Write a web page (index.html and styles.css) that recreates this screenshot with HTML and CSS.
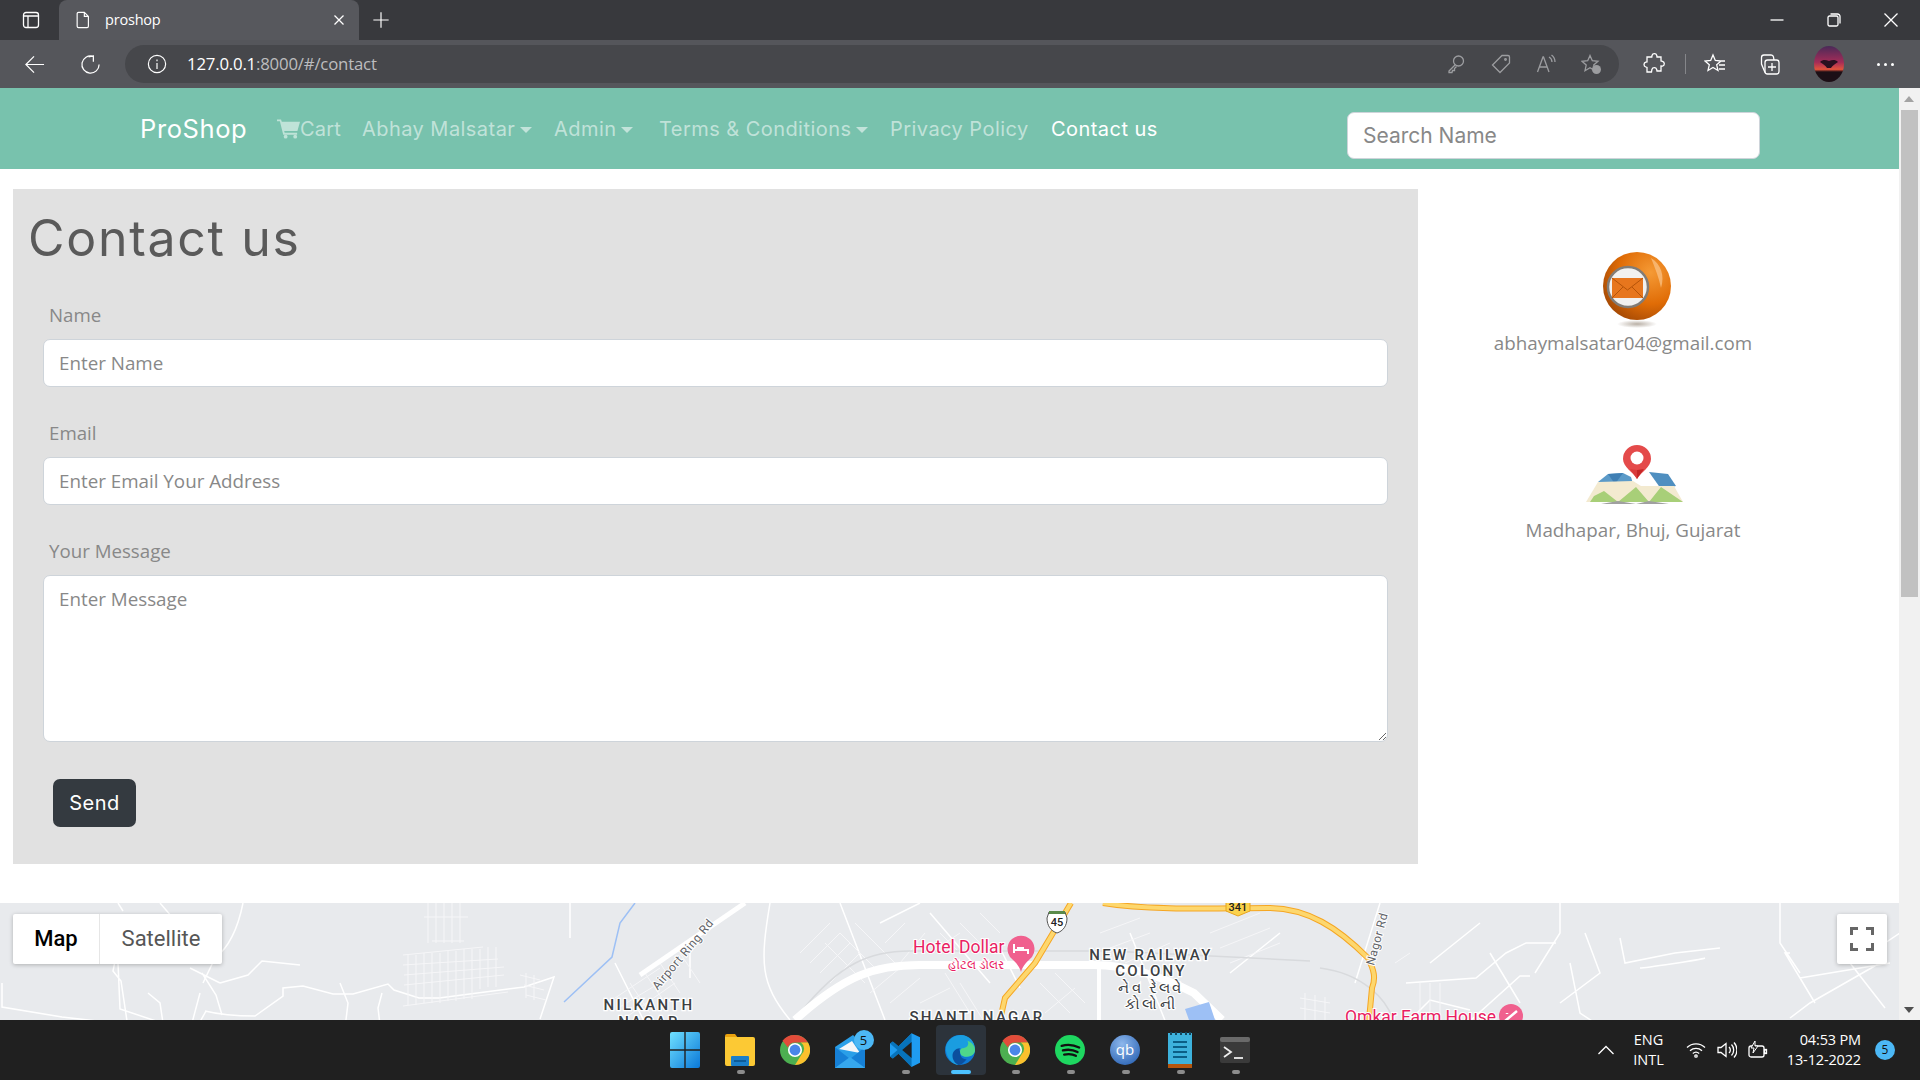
FILE: index.html
```html
<!DOCTYPE html>
<html lang="en">
<head>
<meta charset="utf-8">
<title>proshop</title>
<link rel="stylesheet" href="styles.css">
</head>
<body>
<header class="browser">
  <div class="tabstrip">
    <svg class="ico side-ico" viewBox="0 0 20 20"><rect x="2.5" y="2.5" width="15" height="15" rx="2.5"/><path d="M2.5 6h15M7 6v11.5"/></svg>
    <div class="tab">
      <svg class="ico doc-ico" viewBox="0 0 20 20"><path d="M5 1.5h6.5L16 6v11a1.5 1.5 0 0 1-1.500 1.500H5A1.500 1.500 0 0 1 3.500 17V3A1.500 1.500 0 0 1 5 1.500zM11.500 1.500V6H16"/></svg>
      <span class="tab-title">proshop</span>
      <svg class="ico close-ico" viewBox="0 0 12 12"><path d="M1.500 1.500l9 9M10.500 1.500l-9 9"/></svg>
    </div>
    <svg class="ico plus-ico" viewBox="0 0 20 20"><path d="M10 1.500v17M1.500 10h17"/></svg>
    <div class="winctl">
      <svg class="ico" viewBox="0 0 14 14"><path d="M.5 7h13"/></svg>
      <svg class="ico" viewBox="0 0 14 14"><rect x="1" y="3" width="10" height="10" rx="1.500"/><path d="M3.500 1h7A2.500 2.500 0 0 1 13 3.500v7"/></svg>
      <svg class="ico" viewBox="0 0 14 14"><path d="M.5.5l13 13M13.500.5l-13 13"/></svg>
    </div>
  </div>
  <div class="toolbar">
    <svg class="ico back-ico" viewBox="0 0 22 22"><path d="M21 11H2M10.500 2.500L2 11l8.500 8.500"/></svg>
    <svg class="ico reload-ico" viewBox="0 0 22 22"><path d="M13.500 2.400A9 9 0 1 0 20 11M14 8V2h-0.500M14 2l-5 1"/></svg>
    <div class="addressbar">
      <svg class="ico info-ico" viewBox="0 0 22 22"><circle cx="11" cy="11" r="9.500"/><path d="M11 10v6.500M11 6v2"/></svg>
      <span class="url"><b>127.0.0.1</b>:8000/#/contact</span>
      <span class="addr-icons">
        <svg class="ico dim" viewBox="0 0 20 20"><circle cx="12.500" cy="7" r="5"/><path d="M9 11l-6 6v1.500h3l.5-2h2v-2l2-2"/></svg>
        <svg class="ico dim" viewBox="0 0 20 20"><path d="M11 1.500h6a1.500 1.500 0 0 1 1.500 1.500v6L9 18.500 1.500 11z"/><circle cx="14.500" cy="5.500" r=".8"/></svg>
        <svg class="ico dim" viewBox="0 0 20 20"><path d="M1.500 18L7 3h.5l5.500 15M3.500 13h8M13 3a6 6 0 0 1 3 5M15.500 1a9 9 0 0 1 3.500 7"/></svg>
        <svg class="ico dim" viewBox="0 0 20 20"><path d="M9 1.500l2.300 5.200 5.700.6-4.300 3.800 1.200 5.600L9 13.800 4 16.700l1.200-5.600L1 7.300l5.700-.6z"/><circle class="fill-dim" cx="15.500" cy="15.500" r="4.500"/></svg>
      </span>
    </div>
    <svg class="ico puzzle" viewBox="0 0 22 22"><path d="M9 2.500a2.500 2.500 0 0 1 4.800 0l.2 1.500h4v4l1.500.3a2.500 2.500 0 0 1 0 4.800L18 13v5h-4l-.3-1.500a2.500 2.500 0 0 0-4.800 0L8.500 19H4v-4.500L2.800 14a2.500 2.500 0 0 1 0-4.800L4 9V4h4.800z"/></svg>
    <span class="tool-sep"></span>
    <svg class="ico favs" viewBox="0 0 22 22"><path d="M9 2l2.300 5.500 5.700.5-4.300 3.800 1.300 5.700L9 14.500 4 17.500l1.300-5.700L1 8l5.700-.5zM15 8h6M15 12h6M15 16h6"/></svg>
    <svg class="ico colls" viewBox="0 0 22 22"><rect x="7" y="7" width="14" height="14" rx="2.500"/><path d="M14 10v8M10 14h8M7 19.500L3.500 11V4.500a2.500 2.500 0 0 1 2.500-2.500h7a2.500 2.500 0 0 1 2.500 2l.5 3"/></svg>
    <svg class="avatar" viewBox="0 0 30 36"><defs><linearGradient id="av" x1="0" y1="0" x2="0" y2="1"><stop offset="0" stop-color="#4a2a58"/><stop offset=".45" stop-color="#a42c58"/><stop offset=".65" stop-color="#e2533c"/><stop offset=".72" stop-color="#1c0f16"/></linearGradient></defs><ellipse cx="15" cy="18" rx="15" ry="18" fill="url(#av)"/><path d="M6 16c3-3 6-2 9-1 3-1 6-2 9 1-3 2-6 4-7 6h-4c-1-2-4-4-7-6z" fill="#2a1020"/></svg>
    <span class="dots"><i></i><i></i><i></i></span>
  </div>
</header>

<div class="viewport">
  <div class="page">
    <nav class="navbar">
      <a class="brand">ProShop</a>
      <a class="navlink cart"><svg class="cart-ico" viewBox="0 0 24 20"><path d="M0 0h4.200l.8 2.500h19l-2.700 9.500H7.500l.5 2h13v2H6.500L3 2H0z"/><circle cx="9" cy="18" r="2"/><circle cx="19" cy="18" r="2"/></svg>Cart</a>
      <a class="navlink drop abhay">Abhay Malsatar</a>
      <a class="navlink drop admin">Admin</a>
      <a class="navlink drop terms">Terms &amp; Conditions</a>
      <a class="navlink privacy">Privacy Policy</a>
      <a class="navlink active">Contact us</a>
      <input class="search" type="text" placeholder="Search Name">
    </nav>

    <main class="content">
      <section class="card">
        <h1>Contact us</h1>
        <form class="form">
          <label class="label">Name</label>
          <input class="field" type="text" placeholder="Enter Name">
          <label class="label">Email</label>
          <input class="field" type="text" placeholder="Enter Email Your Address">
          <label class="label">Your Message</label>
          <textarea class="field area" placeholder="Enter Message"></textarea>
          <button class="send" type="button">Send</button>
        </form>
      </section>
      <aside class="side">
        <div class="contact first">
          <svg class="mail-ball" viewBox="0 0 72 78">
            <defs>
              <radialGradient id="ball" cx=".7" cy=".3" r=".85"><stop offset="0" stop-color="#f59a35"/><stop offset=".55" stop-color="#e06c06"/><stop offset="1" stop-color="#9a4304"/></radialGradient>
              <radialGradient id="shade" cx=".5" cy=".5" r=".5"><stop offset="0" stop-color="#b9b0a6"/><stop offset="1" stop-color="#fff"/></radialGradient>
            </defs>
            <ellipse cx="36" cy="72" rx="20" ry="4" fill="url(#shade)"/>
            <circle cx="36" cy="34" r="34" fill="url(#ball)"/>
            <path d="M50 6c10 6 14 18 10 30-2-10-6-20-10-30z" fill="#fbc48a" opacity=".7"/>
            <circle cx="27" cy="35" r="20" fill="#f2f1ef" stroke="#827c76" stroke-width="2.500"/>
            <rect x="11" y="26" width="31" height="20" fill="#e7761d"/>
            <path d="M11 26l15.500 12L42 26M11 46l11-11M42 46L31 35" fill="none" stroke="#b55308" stroke-width="1"/>
          </svg>
          <p>abhaymalsatar04@gmail.com</p>
        </div>
        <div class="contact second">
          <svg class="map-ico" viewBox="0 0 98 60">
            <path d="M12 37l10-8 15-1 8 4 3 10z" fill="#5b9ac8"/>
            <path d="M63 27l19 2 8 12-15 3z" fill="#4f8fc0"/>
            <path d="M22 29l15-1-8 11z" fill="#3f7fb4"/>
            <path d="M0 57l12-20 35-1 8 5 33 0 9 16z" fill="#f3ead0"/>
            <path d="M8 51l10-5 14 11 18-15 13 15 12-15 22 15H4z" fill="#a8cf78"/>
            <path d="M15 59l17-3 18 3 13-3 20 3z" fill="#a0a0a0"/>
            <path d="M51 34c-4-7-14-12-14-20a14 14 0 0 1 28 0c0 8-10 13-14 20z" fill="#e44a4a"/>
            <circle cx="51" cy="13" r="6.500" fill="#fff"/>
            <path d="M51 34c-3-5-5-7-7-10l7 1v9z" fill="#d93c3c"/>
            <path d="M51 34c3-5 5-7 7-10l-7 1z" fill="#c52727"/>
          </svg>
          <p>Madhapar, Bhuj, Gujarat</p>
        </div>
      </aside>
    </main>

    <section class="map">
      <svg class="map-svg" viewBox="0 0 1899 117">
        <g class="r-thin">
          <path d="M118 0l5 8M160 0l12 14-6 8h-18l-4 10M243 0c-5 25-15 45-28 55l-12 25"/>
          <path d="M2 80l0 24 60 10 35 4h30l-6-40-8-10 8-40M118 60l2 46 60 20M148 90l12 10 3 20M200 90l-8 30M206 108l-10 18M205 108c20 5 45 5 50 5l28-20 0-8 20-2 30 8h20l35-10 6 6 25 8 20 0 85-11 30-10-14 42M340 80l8 20-3 25M382 90l-4 15 3 25"/>
          <path d="M202 70l14 22 6 20M220 80l28-8 14-14 38 4M190 65l30 15M570 0v35M615 60l30 60M660 60l40-30"/>
          <path d="M770 0c-10 60-10 80 20 117M840 0l45 117M690 35v40M880 20l40-20M930 10l60 70M1020 85l-20-40M1130 30l40 100M1280 30l-50 40M1380 0l-25 80"/>
          <path d="M1430 60l50-40M1490 50l30 50M1560 0v30l-25 40M1585 30l15 40-40 30M1620 35l5 25 50-10 45-5M1570 60l10 50 60 40M1640 65c5 0 60-8 65-10M1780 0v40l20 30M1790 50l-5 0 30 50M1800 75l90-15M1900 30l-30 20M1850 60l35 45M1790 115l20-15 70-40"/>
          <path d="M1406 80l70-5 30-25 20-10 30 0M1470 118l50-45 10 0M1410 117l20-20 40 10"/>
        </g>
        <g class="r-grid">
          <path d="M428 0v40M436 0v40M444 0v40M452 0v40M460 0v40M424 14h44M432 38h32M403 52l80-8M403 62l95-6M404 72l100-8M404 82l100-10M403 103l105-14M408 52v50M416 52v50M424 50v50M432 50v50M440 50v50M448 48v50M456 48v50M464 46v50M472 46v50M480 46v40M488 44v40M496 44v40M520 72l20 5M524 82l20 5M526 92l20 5M526 70v25M534 72v25"/>
          <path d="M615 95l45-30M618 105l50-30M625 115l50-35M630 80l20 30M645 70l20 30M660 60l20 30M680 50l20 30"/>
          <path d="M800 50l30-30M810 60l30-30M820 70l30-30M830 80l30-30M825 40l40 40M840 30l40 40M855 20l40 40M885 40l20-20M900 60l25-30M930 50l30-20M870 90l30-25M890 100l30-25M920 100l30-15M940 30l20 20M960 20l20 20M980 10l20 20M945 70l25 40M960 80l25 40M1040 80l30 30M1055 70l30 30M1075 85l-30 25M1100 30l40-15M1110 45l40-15M1125 60l45-20M1210 30l50-20M1220 45l50-20M1230 60l50-20"/>
          <path d="M1300 95l30 5M1300 105l30 5M1305 90v27M1315 92v25M1325 94v23M1395 60l15-10M1420 80v35M1430 80v35M1440 80v35"/>
        </g>
        <path class="r-grey" d="M800 110c40-50 70-62 110-62l200 0 200 10M1320 65c40 5 70 30 75 60"/>
        <path class="r-wide" d="M795 117c50-45 80-55 125-55 70 0 120 0 174 0 30 0 65 10 100 28l28 27"/>
        <path class="r-mid" d="M745 0l-105 72"/>
        <path class="r-white" d="M1099 62v55"/>
        <path class="r-river" d="M564 99l48-45 8-34 15-20"/>
        <path class="r-patch" d="M1185 106l24-7 6 18h-26z"/>
        <path class="r-yout" d="M1071 0l-36 60-30 35-5 22"/>
        <path class="r-yin" d="M1071 0l-36 60-30 35-5 22"/>
        <path class="r-yout" d="M1103 0c50 8 120 5 165 5 40 0 70 20 100 50 6 12 8 20 4 30l-3 32"/>
        <path class="r-yin" d="M1103 0c50 8 120 5 165 5 40 0 70 20 100 50 6 12 8 20 4 30l-3 32"/>
        <g class="shield"><path d="M1049 9h16l2 6c0 8-4 13-10 15-6-2-10-7-10-15z" fill="#fff" stroke="#555" stroke-width="1"/><rect x="1049" y="8" width="16" height="3" fill="#5a8a4a"/><text class="sh-text" x="1057" y="23">45</text></g>
        <path d="M1226 -2h24v10l-12 5-12-5z" fill="#fbd24c" stroke="#e8a41f"/><text class="sh-text" x="1238" y="8">341</text>

        <text class="m-label" x="649" y="107">NILKANTH</text>
        <text class="m-label" x="649" y="124">NAGAR</text>
        <text class="m-road" transform="translate(686 54) rotate(-50)">Airport Ring Rd</text>
        <text class="m-road" transform="translate(1381 37) rotate(-75)">Nagor Rd</text>
        <text class="m-hotel" x="913" y="50">Hotel Dollar</text>
        <text class="m-hotel-sub" x="976" y="66">હોટલ ડોલર</text>
        <path class="m-pin" d="M1021 69c-2-7-6-10-11-15a13.500 13.500 0 1 1 22 0c-5 5-9 8-11 15z"/>
        <path d="M1014 41v9M1014 47h14v4M1017 45h7" stroke="#fff" stroke-width="2" fill="none"/>
        <text class="m-label" x="1151" y="57">NEW RAILWAY</text>
        <text class="m-label" x="1151" y="73">COLONY</text>
        <text class="m-label" x="1151" y="90">નેવ રેલવે</text>
        <text class="m-label" x="1151" y="106">કોલોની</text>
        <text class="m-label" x="977" y="119">SHANTI NAGAR</text>
        <text class="m-hotel" x="1345" y="120">Omkar Farm House</text>
        <circle class="m-pin" cx="1511" cy="113" r="12"/>
        <path d="M1505 118l12-10M1507 110v1M1515 117v1" stroke="#fff" stroke-width="2.500"/>
      </svg>
      <div class="maptype"><span class="mt-map">Map</span><span class="mt-sat">Satellite</span></div>
      <div class="fullscreen"><svg viewBox="0 0 24 24"><path d="M1.500 8V1.500H8M16 1.500h6.500V8M1.500 16v6.500H8M16 22.500h6.500V16"/></svg></div>
    </section>
  </div>
  <div class="scrollbar">
    <span class="arrow up"></span>
    <span class="thumb"></span>
    <span class="arrow down"></span>
  </div>
</div>

<footer class="taskbar">
  <div class="tb-left"></div>
  <div class="tb-apps">
    <span class="app"><svg viewBox="0 0 30 36"><defs><linearGradient id="win" x1="0" y1="0" x2="1" y2="1"><stop offset="0" stop-color="#6fe0ff"/><stop offset="1" stop-color="#0a78d8"/></linearGradient></defs><path fill="url(#win)" d="M0 2a2 2 0 0 1 2-2h12.300v17.300H0zM15.700 0H28a2 2 0 0 1 2 2v15.300H15.700zM0 18.700h14.300V36H2a2 2 0 0 1-2-2zM15.700 18.700H30V34a2 2 0 0 1-2 2H15.700z"/></svg></span>
    <span class="app on"><svg viewBox="0 0 30 36"><path d="M0 4a2 2 0 0 1 2-2h8l3 4h-13z" fill="#e9a10e"/><path d="M0 5h28a2 2 0 0 1 2 2v25a2 2 0 0 1-2 2H2a2 2 0 0 1-2-2z" fill="#fcc934"/><rect x="6" y="24" width="18" height="10" rx="1" fill="#1b7fc9"/><rect x="9" y="28" width="12" height="2" fill="#0d5b97"/></svg></span>
    <span class="app"><svg viewBox="0 0 36 36" class="chrome"><g id="chromeg"><circle cx="18" cy="18" r="18" fill="#4caf50"/><path d="M18 0a18 18 0 0 1 15.600 9H18a9 9 0 0 0-8.500 6L3 7A18 18 0 0 1 18 0z" fill="#e24c3a"/><path d="M33.600 9A18 18 0 0 1 18 36l8-13a9 9 0 0 0-1-14z" fill="#fbc02d"/><circle cx="18" cy="18" r="8.500" fill="#fff"/><circle cx="18" cy="18" r="6.500" fill="#4a86e8"/></g></svg></span>
    <span class="app mail"><svg viewBox="0 0 30 36"><path d="M0 15L18 3 30 15v21H0z" fill="#2a9fe8"/><path d="M4 17l13-8 8 12z" fill="#f4f6f8"/><path d="M0 36V15l15 12zM30 36V15L15 27z" fill="#1680d6"/><path d="M0 36l15-11 15 11z" fill="#36a8ee"/></svg><b class="mail-badge">5</b></span>
    <span class="app on"><svg viewBox="0 0 32 36"><path d="M23 0l9 4.500v27L23 36 9 22l-6 5-3-2v-14l3-2 6 5z" fill="#1f9cf0"/><path d="M23 0v36L9 22l-6 5-3-2 8-7-8-7 3-2 6 5z" fill="#0065a9" opacity=".75"/><path d="M23 9.500L13 18l10 8.500z" fill="#202020"/></svg></span>
    <span class="app current"><svg viewBox="0 0 36 36"><circle cx="18" cy="18" r="18" fill="#0f78d4"/><path d="M1 14C4 4 12 0 19 0c10 0 17 8 17 17 0 6-5 9-10 9-6 0-8-3-8-6 0-2 1-3 2-4-5 0-9 4-9 9 0 5 3 9 6 11C9 36 0 26 1 14z" fill="#1a9de0"/><path d="M36 18c0 5-5 8-10 8-6 0-8-3-8-6 0-2 1-3 2-4 5 0 10-3 7-9 6 2 9 7 9 11z" fill="#4ed68a"/><path d="M18 20c0 6 3 9 8 9-3 4-7 7-10 7-4-2-7-6-7-11 0-5 4-9 9-9-1 1-1 2 0 4z" fill="#0b4f9e"/></svg></span>
    <span class="app on"><svg viewBox="0 0 36 36"><use href="#chromeg"/></svg></span>
    <span class="app on"><svg viewBox="0 0 36 36"><circle cx="18" cy="18" r="18" fill="#1ed760"/><path d="M8 13c7-2 14-1.500 21 2M9.500 18.500c6-1.500 12-1 17.500 2M11 23.500c5-1 10-.8 14 1.500" fill="none" stroke="#111" stroke-width="2.800" stroke-linecap="round"/></svg></span>
    <span class="app on"><svg viewBox="0 0 36 36"><defs><radialGradient id="qb" cx=".4" cy=".3" r=".8"><stop offset="0" stop-color="#8db7ec"/><stop offset="1" stop-color="#2b64b4"/></radialGradient></defs><circle cx="18" cy="18" r="18" fill="url(#qb)"/><text class="qb-text" x="18" y="24">qb</text></svg></span>
    <span class="app on"><svg viewBox="0 0 24 36"><rect y="1" width="24" height="33" fill="#3db2dc"/><rect y="32" width="24" height="4" fill="#b5560e"/><path d="M5 10h14M5 15h14M5 20h14M5 25h14" stroke="#0b5f86" stroke-width="2"/><path d="M3 0v3M8 0v3M13 0v3M18 0v3M22 0v3" stroke="#15485e" stroke-width="2"/></svg></span>
    <span class="app on"><svg viewBox="0 0 30 26"><rect width="30" height="26" rx="2" fill="#3a3a3a"/><rect width="30" height="5" rx="2" fill="#6a6a6a"/><path d="M4 10l7 5-7 5" fill="none" stroke="#eee" stroke-width="1.800"/><path d="M14 21h9" stroke="#eee" stroke-width="1.800"/></svg></span>
  </div>
  <div class="tray">
    <svg class="ico chev" viewBox="0 0 16 10"><path d="M.5 9L8 1.500 15.500 9"/></svg>
    <div class="lang">ENG<br>INTL</div>
    <svg class="ico sys wifi" viewBox="0 0 20 16"><path d="M1 5.500a13 13 0 0 1 18 0M4 8.700a9 9 0 0 1 12 0M6.800 11.500a5 5 0 0 1 6.400 0"/><circle class="fill-w" cx="10" cy="14" r="1.200"/></svg>
    <svg class="ico sys" viewBox="0 0 20 18"><path d="M1 6.500v5h3l5 4v-13l-5 4zM12 6a4 4 0 0 1 0 6M14.500 3.500a8 8 0 0 1 0 11M17 1.500a11 11 0 0 1 0 15"/></svg>
    <svg class="ico sys" viewBox="0 0 20 18"><rect class="fill-w" x="1" y="5" width="15" height="11" rx="2"/><rect class="fill-w" x="16.500" y="8.500" width="2" height="4"/><path class="bolt" d="M7 0L3 7h3l-1 5 5-7H7z"/></svg>
    <div class="clock">04:53 PM<br>13-12-2022</div>
    <b class="note">5</b>
  </div>
</footer>
</body>
</html>
```

FILE: styles.css
```css
* { box-sizing: border-box; }
html, body { margin: 0; height: 100%; overflow: hidden; }
body { display: flex; flex-direction: column; width: 1920px; height: 1080px; font-family: "Open Sans", "Noto Sans", sans-serif; background: #fff; }

/* browser chrome */
.browser { flex: none; height: 88px; background: #55565b; color: #fff; }
.ico { fill: none; stroke: currentColor; stroke-width: 1.300; flex: none; }
.tabstrip { height: 40px; background: #38393d; display: flex; align-items: center; padding-left: 21px; position: relative; }
.side-ico { width: 20px; height: 20px; }
.tab { width: 300px; height: 40px; margin-left: 18px; background: #57585d; border-radius: 8px 8px 0 0; display: flex; align-items: center; padding-left: 15px; }
.doc-ico { width: 18px; height: 20px; }
.tab-title { font-size: 14.500px; line-height: 18px; margin: -1px 0 0 13px; letter-spacing: -.2px; flex: 1; }
.close-ico { width: 12px; height: 12px; margin-right: 14px; }
.plus-ico { width: 18px; height: 18px; margin-left: 13px; }
.winctl { margin-left: auto; display: flex; gap: 43px; padding-right: 22px; }
.winctl .ico { width: 14px; height: 14px; }
.toolbar { height: 48px; display: flex; align-items: center; padding: 0 0 0 24px; position: relative; }
.back-ico { width: 21px; height: 21px; }
.reload-ico { width: 21px; height: 21px; margin-left: 35px; }
.addressbar { width: 1494px; height: 38px; margin-left: 24px; border-radius: 19px; background: #46474b; display: flex; align-items: center; padding-left: 22px; }
.info-ico { width: 20px; height: 20px; }
.url { margin: -2px 0 0 20px; font-size: 16.800px; color: #bdbdbf; letter-spacing: -.2px; }
.url b { font-weight: 400; color: #fff; }
.addr-icons { margin-left: auto; padding-right: 18px; display: flex; gap: 25px; }
.addr-icons .ico { width: 20px; height: 20px; color: #9c9da0; }
.fill-dim { fill: #9c9da0; stroke: none; }
.puzzle { width: 22px; height: 22px; margin-left: 24px; }
.tool-sep { width: 1px; height: 20px; background: #85868a; margin-left: 20px; }
.favs { width: 22px; height: 22px; margin-left: 18px; }
.colls { width: 22px; height: 22px; margin-left: 32px; }
.avatar { width: 30px; height: 36px; margin-left: 34px; flex: none; }
.dots { display: flex; gap: 4px; margin-left: 33px; }
.dots i { width: 3px; height: 3px; border-radius: 50%; background: #fff; }

/* page */
.viewport { flex: none; height: 932px; display: flex; overflow: hidden; }
.page { width: 1899px; flex: none; display: flex; flex-direction: column; }
.navbar { flex: none; height: 81px; background: #78c2ad; display: flex; align-items: center; padding-left: 140px; font-family: Inter, sans-serif; font-size: 20px; letter-spacing: .45px; color: rgba(255,255,255,.55); }
.brand { font-size: 25.500px; color: #fff; letter-spacing: .6px; width: 137px; flex: none; }
.navlink { flex: none; white-space: nowrap; }
.cart { display: flex; align-items: center; width: 85px; letter-spacing: .2px; }
.cart-ico { width: 23px; height: 20px; fill: #bfe3d8; flex: none; }
.drop::after { content: ""; display: inline-block; margin-left: 5px; vertical-align: 3px; border-top: 6px solid; border-left: 6px solid transparent; border-right: 6px solid transparent; }
.abhay { width: 192px; }
.admin { width: 105px; }
.terms { width: 231px; }
.privacy { width: 161px; }
.active { color: #fff; width: 296px; }
.search { width: 413px; height: 47px; flex: none; margin-top: 14px; border: 1px solid #ced4da; border-radius: 7px; padding: 0 15px; font: 21px Inter, sans-serif; background: #fff; outline: none; }
.search::placeholder { color: #888; opacity: 1; }

.content { flex: none; display: flex; padding: 20px 0 0 13px; height: 734px; }
.card { width: 1405px; height: 675px; flex: none; background: #e1e1e1; padding: 0 30px 0 15px; }
.card h1 { margin: 0; height: 114px; padding-top: 14px; font: 400 50px/70px Inter, sans-serif; color: #5a5a5a; letter-spacing: 1.700px; }
.form { display: flex; flex-direction: column; padding-left: 15px; }
.label { font-size: 18.700px; line-height: 24px; color: #888; margin-left: 6px; margin-bottom: 12px; }
.field { width: 100%; height: 48px; flex: none; border: 1px solid #ced4da; border-radius: 7px; padding: 0 15px; margin-bottom: 34px; background: #fff; font: 18.800px "Open Sans", sans-serif; outline: none; }
.field::placeholder { color: #888; opacity: 1; }
.area { height: 167px; margin-bottom: 37px; padding-top: 10px; }
.send { width: 83px; height: 48px; margin-left: 10px; border: 0; border-radius: 7px; background: #343a40; color: #fff; font: 20px Inter, sans-serif; letter-spacing: .5px; }

.side { flex: 1; display: flex; flex-direction: column; align-items: center; padding: 63px 61px 0 0; }
.contact p { margin: 0; font-size: 18.800px; line-height: 24px; color: #888; text-align: center; white-space: nowrap; }
.first { margin-right: 10px; display: flex; flex-direction: column; align-items: center; }
.mail-ball { width: 72px; height: 78px; margin-left: 28px; margin-bottom: 1px; display: block; }
.second { margin: 90px 0 0 10px; display: flex; flex-direction: column; align-items: center; }
.map-ico { width: 98px; height: 60px; display: block; margin: 0 0 13px 4px; }

.map { flex: 1; position: relative; margin-top: 0; background: #e8eaed; overflow: hidden; }
.map-svg { display: block; width: 1899px; height: 117px; }
.r-thin { fill: none; stroke: #fff; stroke-width: 1.500; }
.r-grid { fill: none; stroke: #f6f6f8; stroke-width: 1; }
.r-grey { fill: none; stroke: #d8dadd; stroke-width: 1.500; }
.r-wide { fill: none; stroke: #fff; stroke-width: 8; }
.r-mid { fill: none; stroke: #fff; stroke-width: 5; }
.r-white { fill: none; stroke: #fff; stroke-width: 4; }
.r-river { fill: none; stroke: #9dc0f5; stroke-width: 1.500; }
.r-patch { fill: #9dc0f5; }
.r-yout { fill: none; stroke: #f5a623; stroke-width: 6; }
.r-yin { fill: none; stroke: #fdd76e; stroke-width: 4; }
.sh-text { font: 500 11px Roboto, sans-serif; text-anchor: middle; fill: #222; }
.m-label { font: 500 15px Roboto, "Noto Sans", sans-serif; letter-spacing: 2.300px; text-anchor: middle; fill: #3c4043; stroke: #fff; stroke-width: 2.500px; paint-order: stroke; }
.m-road { font: 12px Roboto, sans-serif; letter-spacing: .5px; text-anchor: middle; fill: #5f6368; stroke: #fff; stroke-width: 2px; paint-order: stroke; }
.m-hotel { font: 400 17.500px Roboto, sans-serif; fill: #e91e63; stroke: #fff; stroke-width: 2px; paint-order: stroke; }
.m-hotel-sub { font: 12px Roboto, "Noto Sans", sans-serif; text-anchor: middle; fill: #e91e63; stroke: #fff; stroke-width: 2px; paint-order: stroke; }
.m-pin { fill: #f0608e; }
.maptype { position: absolute; left: 13px; top: 11px; width: 209px; height: 50px; background: #fff; border-radius: 2px; box-shadow: 0 1px 4px rgba(0,0,0,.25); display: flex; font: 22px/50px Roboto, sans-serif; }
.mt-map { width: 87px; text-align: center; font-weight: 500; color: #000; border-right: 1px solid #e6e6e6; }
.mt-sat { flex: 1; text-align: center; color: #565656; }
.fullscreen { position: absolute; left: 1837px; top: 11px; width: 50px; height: 50px; background: #fff; border-radius: 2px; box-shadow: 0 1px 4px rgba(0,0,0,.25); display: flex; align-items: center; justify-content: center; }
.fullscreen svg { width: 24px; height: 24px; fill: none; stroke: #666; stroke-width: 3; }

.scrollbar { flex: 1; background: #f1f1f1; position: relative; }
.thumb { position: absolute; left: 2px; right: 2px; top: 22px; height: 487px; background: #c1c1c1; }
.arrow { position: absolute; left: 5px; border-left: 5px solid transparent; border-right: 5px solid transparent; }
.arrow.up { top: 8px; border-bottom: 6px solid #a3a3a3; }
.arrow.down { bottom: 7px; border-top: 6px solid #505050; }

/* taskbar */
.taskbar { flex: none; height: 60px; background: #202020; display: grid; grid-template-columns: 1fr auto 1fr; color: #fff; }
.tb-apps { display: flex; align-items: center; }
.app { width: 55px; height: 60px; display: flex; align-items: center; justify-content: center; position: relative; }
.app svg { width: 30px; height: 36px; }
.app.on::after { content: ""; position: absolute; left: 24px; bottom: 6px; width: 8px; height: 4px; border-radius: 2px; background: #8c8c8c; }
.current::before { content: ""; position: absolute; left: 3px; top: 5px; width: 50px; height: 50px; border-radius: 4px; background: #2c333b; }
.current::after { content: ""; position: absolute; left: 18px; bottom: 6px; width: 20px; height: 4px; border-radius: 2px; background: #4cc2ff; }
.current svg { position: relative; }
.mail-badge { position: absolute; left: 31px; top: 10px; width: 20px; height: 20px; border-radius: 50%; background: #4cb8f5; color: #111; font: 400 13px/20px "Open Sans", sans-serif; text-align: center; }
.qb-text { font: 500 18px "Open Sans", sans-serif; text-anchor: middle; fill: #fff; }
.tray { display: flex; align-items: center; justify-content: flex-end; font-size: 14.500px; line-height: 20px; }
.chev { width: 16px; height: 10px; margin-right: 19px; }
.lang { text-align: center; margin-right: 22px; }
.sys { width: 20px; height: 18px; margin-right: 11px; }
.fill-w { stroke: #fff; }
.bolt { fill: #202020; stroke: #fff; stroke-width: 1; }
.clock { text-align: right; margin-left: 8px; margin-right: 14px; letter-spacing: -.15px; }
.note { width: 20px; height: 20px; border-radius: 50%; background: #4cb8f5; color: #111; font: 400 12px/20px "Open Sans", sans-serif; text-align: center; margin-right: 25px; }
```
